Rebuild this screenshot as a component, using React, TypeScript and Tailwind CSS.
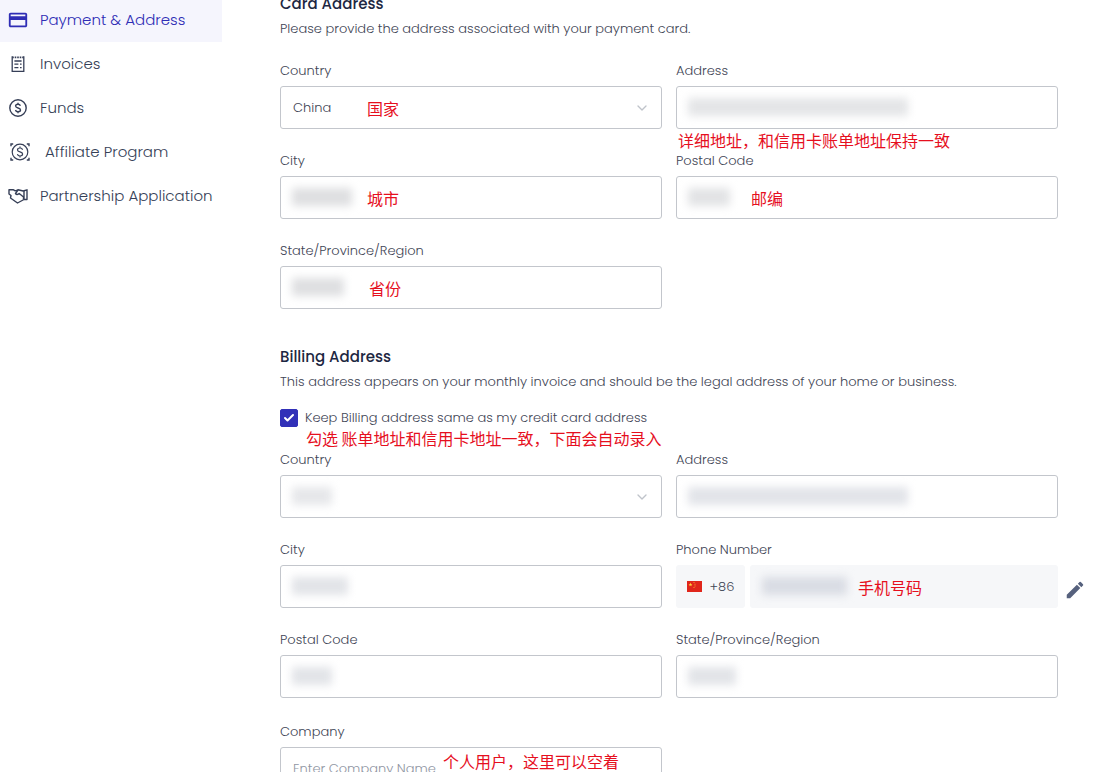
import { useId, useState } from 'react'
import type { ReactNode } from 'react'
import clsx from 'clsx'
import { Check, ChevronDown } from 'lucide-react'
import { MdCreditCard, MdEdit } from 'react-icons/md'

const inputClass =
	'h-[43px] w-full rounded-[3px] border border-[#c3c6cc] bg-white px-3 text-[13px] text-[#3f4656] outline-none placeholder:text-[#9096a3] focus:border-[#3130b8]'

function InvoiceIcon() {
	return (
		<svg
			viewBox="0 0 18 18"
			className="size-[18px]"
			fill="none"
			stroke="currentColor"
			strokeWidth="1.3"
			aria-hidden="true"
		>
			<path d="M3.2 1.2v15.200h11.600V1.200" />
			<path d="M3.2 2.4h11.6" strokeWidth="1.8" strokeDasharray="1.6 0.9" />
			<path d="M5.400 6h7.200M5.400 9.200h4M11 9.200h1.600M5.400 12.600h4M11 12.600h1.600" />
		</svg>
	)
}

function FundsIcon() {
	return (
		<svg
			viewBox="0 0 18 18"
			className="size-[18px]"
			fill="none"
			stroke="currentColor"
			strokeWidth="1.4"
			aria-hidden="true"
		>
			<circle cx="9" cy="9" r="8.2" />
			<path d="M11.4 6.8C11 5.7 10.2 5.3 9 5.3c-1.4 0-2.400.7-2.400 1.800 0 2.700 4.900 1.100 4.900 3.800 0 1.100-1 1.800-2.500 1.800-1.300 0-2.200-.5-2.500-1.700M9 3.700v1.600M9 12.700v1.600" />
		</svg>
	)
}

function AffiliateIcon() {
	return (
		<svg
			viewBox="0 0 20 20"
			className="size-5"
			fill="none"
			stroke="currentColor"
			strokeWidth="1.2"
			aria-hidden="true"
		>
			<circle cx="10" cy="10" r="7.8" />
			<path d="M12.600 7.800C12.200 6.500 11.300 6 10 6c-1.500 0-2.500.7-2.500 1.900 0 2.800 5.100 1.300 5.100 4.200 0 1.200-1.100 1.900-2.600 1.900-1.400 0-2.300-.6-2.600-1.800M10 4.500V6M10 14v1.500" />
			<path
				d="M1 4.200V2h2.200M19 4.200V2h-2.200M1 15.800V18h2.200M19 15.800V18h-2.200"
				strokeWidth="1.4"
			/>
		</svg>
	)
}

function HandshakeIcon() {
	return (
		<svg
			viewBox="0 0 20 16"
			className="h-4 w-5"
			fill="none"
			stroke="currentColor"
			strokeWidth="1.4"
			strokeLinejoin="round"
			aria-hidden="true"
		>
			<path d="M1 1.800h4.500l1.800 1.100 2.700-1.100 5.200 1.200L19 1.800v9.700h-3L9.500 15 2.500 10 3 7.500 1 6z" />
			<path d="M10 2 7.500 5.500c1 1.400 2.400 1.200 3.700 0L15.500 9v2.500M16 3v8" />
		</svg>
	)
}

const navItems = [
	{
		name: 'Payment & Address',
		icon: <MdCreditCard className="size-[22px] shrink-0" />,
		active: true,
	},
	{ name: 'Invoices', icon: <InvoiceIcon /> },
	{ name: 'Funds', icon: <FundsIcon /> },
	{ name: 'Affiliate Program', icon: <AffiliateIcon />, wide: true },
	{ name: 'Partnership Application', icon: <HandshakeIcon /> },
]

function Sidebar() {
	return (
		<nav className="-mt-0.5 w-[222px] shrink-0">
			<ul>
				{navItems.map((item) => (
					<li key={item.name}>
						<a
							href="#"
							className={clsx(
								'flex h-11 items-center pl-[7px] text-[15px] whitespace-nowrap',
								item.active ? 'bg-[#f5f5fd] text-[#2f2db5]' : 'text-[#363f57]',
								item.wide ? 'gap-3' : 'gap-[11px]',
							)}
						>
							<span
								className={clsx(
									'flex shrink-0 justify-center',
									item.wide ? 'w-[26px]' : 'w-[22px]',
								)}
							>
								{item.icon}
							</span>
							{item.name}
						</a>
					</li>
				))}
			</ul>
		</nav>
	)
}

// Red hand-added hint that sits over the form
function Note({ className, children }: { className: string; children: ReactNode }) {
	return (
		<span
			className={clsx(
				'pointer-events-none absolute z-10 font-["Noto_Sans_CJK_SC",sans-serif] text-base leading-5 font-normal whitespace-nowrap text-[#e60f1e]',
				className,
			)}
		>
			{children}
		</span>
	)
}

// Smudge over a private value
function Redacted({ className }: { className: string }) {
	return (
		<span
			aria-hidden="true"
			className={clsx(
				'pointer-events-none absolute top-3 left-3 h-[18px] blur-[4px]',
				className,
			)}
		/>
	)
}

type FieldProps = {
	label: string
	placeholder?: string
	redacted?: string
	options?: string[]
	children?: ReactNode
}

function Field({ label, placeholder, redacted, options, children }: FieldProps) {
	const id = useId()
	return (
		<div className="flex flex-col gap-[5px]">
			<label htmlFor={id} className="text-[13px] leading-5">
				{label}
			</label>
			<div className="relative">
				{options ? (
					<>
						<select id={id} className={clsx(inputClass, 'appearance-none')}>
							{options.map((option) => (
								<option key={option}>{option}</option>
							))}
						</select>
						<ChevronDown
							className="pointer-events-none absolute top-3.5 right-3 size-4 text-[#bfc3ca]"
							aria-hidden="true"
						/>
					</>
				) : (
					<input id={id} type="text" placeholder={placeholder} className={inputClass} />
				)}
				{redacted && <Redacted className={redacted} />}
				{children}
			</div>
		</div>
	)
}

function PhoneField() {
	return (
		<div className="flex flex-col gap-[5px]">
			<label htmlFor="phone" className="text-[13px] leading-5">
				Phone Number
			</label>
			<div className="relative flex gap-[5px]">
				<button
					type="button"
					className="flex h-[43px] w-[69px] shrink-0 items-center justify-center gap-2 rounded-[3px] bg-[#f6f7f9] text-[13px]"
				>
					<svg viewBox="0 0 15 11" className="h-[11px] w-[15px]" aria-hidden="true">
						<rect width="15" height="11" fill="#e0261b" />
						<path
							d="m3.5 1.500.5 1.400h1.500l-1.200.9.4 1.400-1.200-.8-1.200.8.4-1.400-1.200-.9H3z"
							fill="#ffd43b"
						/>
						<path d="M6.500 1h1v1h-1zM7.500 2.700h1v1h-1zM7.500 4.500h1v1h-1zM6.500 6h1v1h-1z" fill="#f59a2c" />
					</svg>
					+86
				</button>
				<div className="relative flex-1">
					<input
						id="phone"
						type="tel"
						className="h-[43px] w-full rounded-[3px] bg-[#f6f7f9] px-3 text-[13px] outline-none"
					/>
					<Redacted className="w-[85px] bg-[#d9dce4]" />
					<Note className="top-3 left-[108px]">手机号码</Note>
				</div>
				<button
					type="button"
					aria-label="Edit phone number"
					className="absolute top-3.5 left-full ml-1.5 text-[#56617d]"
				>
					<MdEdit className="size-[22px]" />
				</button>
			</div>
		</div>
	)
}

function SectionHeading({ title, description }: { title: string; description: string }) {
	return (
		<>
			<h2 className="text-[15px] leading-[30px] font-medium text-[#1d2742]">{title}</h2>
			<p className="text-[13px] leading-5">{description}</p>
		</>
	)
}

const gridClass = 'mt-[22px] grid grid-cols-2 gap-x-3.5 gap-y-[22px]'

export default function App() {
	const [sameAddress, setSameAddress] = useState(true)

	return (
		<div className="flex h-screen overflow-hidden bg-white font-[Poppins,Inter,sans-serif] font-light text-[#3f4656]">
			<Sidebar />
			<main className="min-w-0 flex-1 pr-10 pl-[58px]">
				<section className="-mt-[11px]">
					<SectionHeading
						title="Card Address"
						description="Please provide the address associated with your payment card."
					/>
					<div className={gridClass}>
						<Field label="Country" options={['China']}>
							<Note className="top-3 left-[87px]">国家</Note>
						</Field>
						<Field label="Address" redacted="w-[220px] bg-[#e4e5e7]">
							<Note className="top-11 left-0.5">
								详细地址，和信用卡账单地址保持一致
							</Note>
						</Field>
						<Field label="City" redacted="w-[60px] bg-[#dedfe1]">
							<Note className="top-3 left-[87px]">城市</Note>
						</Field>
						<Field label="Postal Code" redacted="w-[42px] bg-[#e2e3e5]">
							<Note className="top-3 left-[75px]">邮编</Note>
						</Field>
						<Field label="State/Province/Region" redacted="w-[52px] bg-[#dedfe1]">
							<Note className="top-3 left-[89px]">省份</Note>
						</Field>
					</div>
				</section>

				<section className="mt-[33px]">
					<SectionHeading
						title="Billing Address"
						description="This address appears on your monthly invoice and should be the legal address of your home or business."
					/>
					<div className="relative mt-4">
						<label className="flex h-5 items-center gap-[7px] text-[13px] leading-5">
							<input
								type="checkbox"
								checked={sameAddress}
								onChange={(e) => setSameAddress(e.target.checked)}
								className="peer size-[18px] appearance-none rounded-[2px] border border-[#3130b8] checked:bg-[#3130b8]"
							/>
							<Check
								strokeWidth={4}
								className="pointer-events-none absolute left-[3px] hidden size-3 text-white peer-checked:block"
								aria-hidden="true"
							/>
							Keep Billing address same as my credit card address
						</label>
						<Note className="top-5 left-[26px]">
							勾选 账单地址和信用卡地址一致，下面会自动录入
						</Note>
					</div>
					<div className={gridClass}>
						<Field label="Country" options={['']} redacted="w-10 bg-[#e6e7ea]" />
						<Field label="Address" redacted="w-[220px] bg-[#e2e4e9]" />
						<Field label="City" redacted="w-[56px] bg-[#e2e4e8]" />
						<PhoneField />
						<Field label="Postal Code" redacted="w-10 bg-[#e2e4e8]" />
						<Field label="State/Province/Region" redacted="w-12 bg-[#e2e4e8]" />
					</div>
					<div className="mt-6 grid grid-cols-2 gap-x-3.5">
						<Field label="Company" placeholder="Enter Company Name">
							<Note className="top-1 left-[163px]">个人用户，这里可以空着</Note>
						</Field>
					</div>
				</section>
			</main>
		</div>
	)
}
